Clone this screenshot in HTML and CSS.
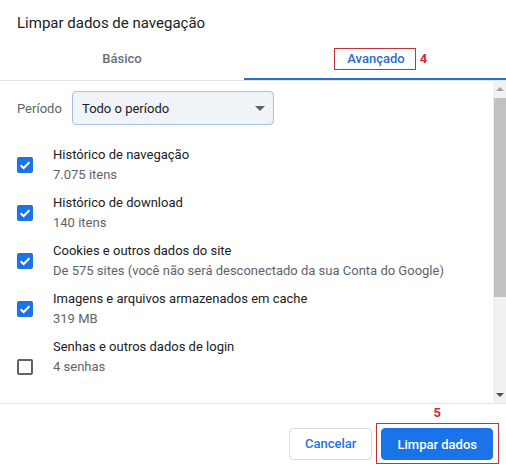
FILE: index.html
```html
<!DOCTYPE html>
<html lang="pt-BR">
<head>
<meta charset="utf-8">
<title>Limpar dados de navegação</title>
<link rel="stylesheet" href="styles.css">
</head>
<body>
<div class="dialog">
  <h1 class="title">Limpar dados de navegação</h1>
  <div class="tabs">
    <div class="tab"><span class="tab-label">Básico</span></div>
    <div class="tab active"><span class="tab-label marked">Avançado<span class="mark-num tab-num">4</span></span></div>
  </div>
  <div class="body">
    <div class="content">
      <div class="scroll">
        <div class="period-row">
          <span class="period-label">Período</span>
          <div class="select"><span>Todo o período</span><span class="select-arrow"></span></div>
        </div>
        <ul class="items">
          <li class="item">
            <span class="checkbox checked"><svg viewBox="0 0 16 16" width="16" height="16"><path d="M3.6 8.3 6.6 11.1 12.4 5.2" fill="none" stroke="#fff" stroke-width="2"/></svg></span>
            <div class="item-text"><div class="item-title">Histórico de navegação</div><div class="item-sub">7.075 itens</div></div>
          </li>
          <li class="item">
            <span class="checkbox checked"><svg viewBox="0 0 16 16" width="16" height="16"><path d="M3.6 8.3 6.6 11.1 12.4 5.2" fill="none" stroke="#fff" stroke-width="2"/></svg></span>
            <div class="item-text"><div class="item-title">Histórico de download</div><div class="item-sub">140 itens</div></div>
          </li>
          <li class="item">
            <span class="checkbox checked"><svg viewBox="0 0 16 16" width="16" height="16"><path d="M3.6 8.3 6.6 11.1 12.4 5.2" fill="none" stroke="#fff" stroke-width="2"/></svg></span>
            <div class="item-text"><div class="item-title">Cookies e outros dados do site</div><div class="item-sub">De 575 sites (você não será desconectado da sua Conta do Google)</div></div>
          </li>
          <li class="item">
            <span class="checkbox checked"><svg viewBox="0 0 16 16" width="16" height="16"><path d="M3.6 8.3 6.6 11.1 12.4 5.2" fill="none" stroke="#fff" stroke-width="2"/></svg></span>
            <div class="item-text"><div class="item-title">Imagens e arquivos armazenados em cache</div><div class="item-sub">319 MB</div></div>
          </li>
          <li class="item">
            <span class="checkbox"></span>
            <div class="item-text three-line"><div class="item-title">Senhas e outros dados de login</div><div class="item-sub">4 senhas</div></div>
          </li>
        </ul>
      </div>
    </div>
    <div class="scrollbar">
      <div class="sb-btn"><span class="sb-arrow up"></span></div>
      <div class="sb-track"><div class="sb-thumb"></div></div>
      <div class="sb-btn"><span class="sb-arrow down"></span></div>
    </div>
  </div>
  <div class="footer">
    <button class="btn secondary">Cancelar</button>
    <span class="mark-box"><span class="mark-num btn-num">5</span><button class="btn primary">Limpar dados</button></span>
  </div>
</div>
</body>
</html>
```
FILE: styles.css
```css
html, body {
  margin: 0;
  padding: 0;
  background: #ffffff;
}

body {
  font-family: Roboto, "Noto Sans", Arial, sans-serif;
  font-size: 13px;
  color: #202124;
}

.dialog {
  width: 506px;
  height: 472px;
  overflow: hidden;
}

.title {
  margin: 0;
  padding: 13px 0 0 17px;
  font-size: 15px;
  font-weight: 400;
  line-height: 20px;
  color: #202124;
}

.tabs {
  display: grid;
  grid-template-columns: 244px 1fr;
  margin-top: 7px;
  border-bottom: 1px solid #e2e2e2;
}

.tab {
  display: flex;
  justify-content: center;
  padding: 8px 0;
  border-bottom: 2px solid transparent;
  font-size: 13px;
  font-weight: 500;
  color: #6b6e72;
}

.tab.active {
  color: #2a6bd0;
  border-bottom-color: #2f6cc8;
}

.tab-label {
  position: relative;
  line-height: 20px;
  border: 1px solid transparent;
}

.tab-label.marked {
  border-color: #c2323a;
  padding: 0 10px 0 12px;
}

.mark-num {
  position: absolute;
  color: #cf2a2a;
  font-weight: 700;
  font-size: 13px;
  line-height: 20px;
}

.tab-num {
  left: calc(100% + 5px);
  top: 0;
}

.body {
  display: flex;
  height: 322px;
  border-bottom: 1px solid #e3e3e3;
}

.content {
  flex: 1;
  min-width: 0;
  display: flex;
  flex-direction: column;
  padding-bottom: 20px;
}

.scroll {
  flex: 1;
  overflow: hidden;
  padding: 10px 0 0 17px;
}

.period-row {
  display: flex;
  align-items: center;
}

.period-label {
  width: 55px;
  flex-shrink: 0;
  color: #5f6368;
}

.select {
  box-sizing: border-box;
  width: 202px;
  height: 34px;
  border: 1px solid #a9c0e6;
  border-radius: 4px;
  background: #f0f3f8;
  display: flex;
  align-items: center;
  justify-content: space-between;
  padding: 0 8px 0 9px;
  color: #202124;
}

.select-arrow {
  width: 0;
  height: 0;
  border-left: 5px solid transparent;
  border-right: 5px solid transparent;
  border-top: 5px solid #5f6368;
  margin-top: 1px;
}

.items {
  list-style: none;
  margin: 16px 0 0;
  padding: 0;
}

.item {
  display: flex;
  align-items: center;
  gap: 20px;
  padding: 4px 0;
}

.checkbox {
  box-sizing: border-box;
  width: 16px;
  height: 16px;
  flex-shrink: 0;
  border-radius: 2px;
  border: 2px solid #5f6368;
}

.checkbox.checked {
  border: none;
  background: #1a73e8;
}

.checkbox svg {
  display: block;
}

.item-text {
  line-height: 20px;
  font-size: 13px;
}

.item-text.three-line {
  padding-bottom: 20px;
}

.item-title {
  color: #202124;
}

.item-sub {
  color: #5f6368;
}

.scrollbar {
  width: 13px;
  flex-shrink: 0;
  background: #f1f1f1;
  display: flex;
  flex-direction: column;
}

.sb-btn {
  height: 16px;
  display: flex;
  align-items: center;
  justify-content: center;
}

.sb-arrow {
  width: 0;
  height: 0;
  border-left: 4px solid transparent;
  border-right: 4px solid transparent;
}

.sb-arrow.up {
  border-bottom: 4px solid #a3a3a3;
}

.sb-arrow.down {
  border-top: 4px solid #505050;
}

.sb-track {
  flex: 1;
  padding: 1px 0 0 1px;
}

.sb-thumb {
  height: 199px;
  background: #c1c1c1;
}

.footer {
  display: flex;
  justify-content: flex-end;
  align-items: center;
  gap: 4px;
  padding: 19px 7px 0 0;
}

.btn {
  box-sizing: border-box;
  height: 32px;
  border-radius: 4px;
  font-family: Roboto, "Noto Sans", Arial, sans-serif;
  font-size: 13px;
  font-weight: 500;
  padding: 0 15px;
  cursor: pointer;
}

.btn.secondary {
  background: #ffffff;
  border: 1px solid #dadce0;
  color: #1a73e8;
}

.btn.primary {
  background: #1a73e8;
  border: 1px solid #1a73e8;
  color: #ffffff;
}

.mark-box {
  position: relative;
  display: flex;
  border: 1px solid #c2323a;
  padding: 4px 5px 3px 4px;
}

.btn-num {
  left: 56px;
  top: -21px;
}
```
